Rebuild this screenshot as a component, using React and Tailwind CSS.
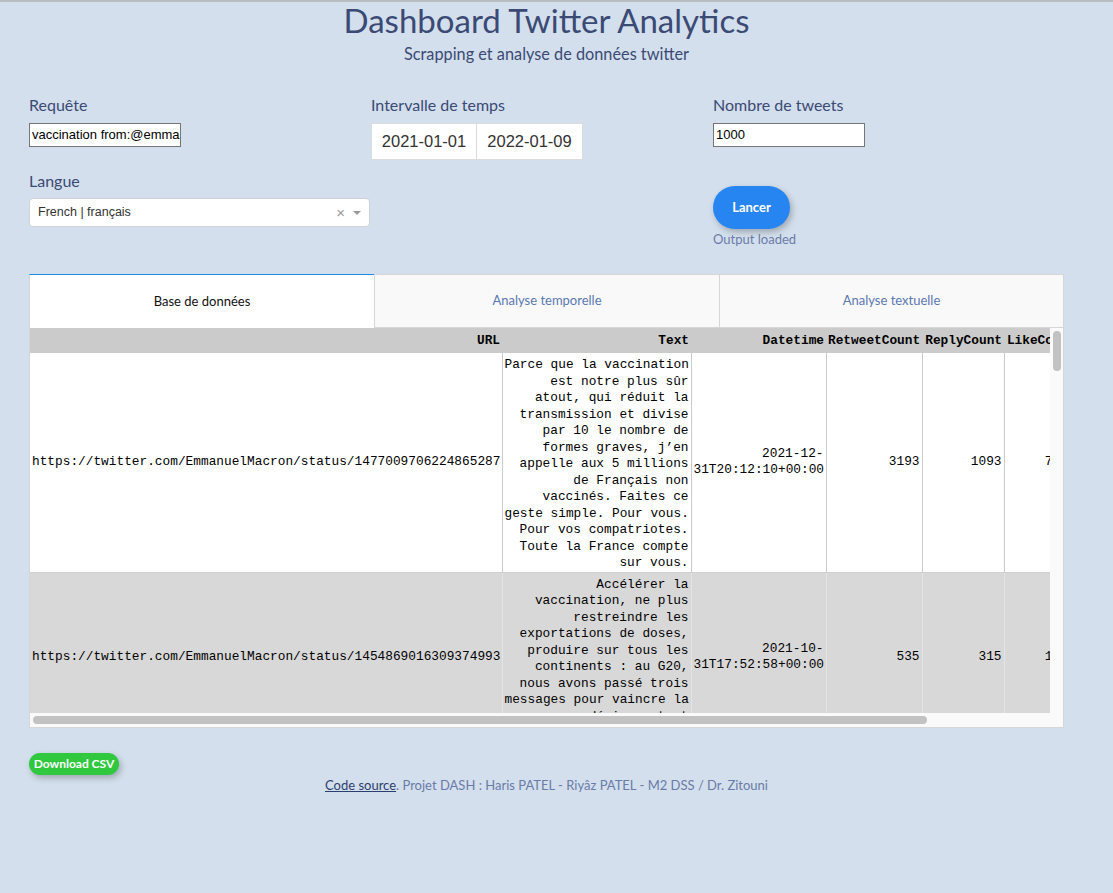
import React from "react";

const row1Text = [
  "Parce que la vaccination",
  "est notre plus sûr",
  "atout, qui réduit la",
  "transmission et divise",
  "par 10 le nombre de",
  "formes graves, j’en",
  "appelle aux 5 millions",
  "de Français non",
  "vaccinés. Faites ce",
  "geste simple. Pour vous.",
  "Pour vos compatriotes.",
  "Toute la France compte",
  "sur vous.",
];

const row2Text = [
  "Accélérer la",
  "vaccination, ne plus",
  "restreindre les",
  "exportations de doses,",
  "produire sur tous les",
  "continents : au G20,",
  "nous avons passé trois",
  "messages pour vaincre la",
  "pandémie partout",
  "dans le monde.",
];

function Lines({ lines }) {
  return (
    <>
      {lines.map((l, i) => (
        <div key={i}>{l}</div>
      ))}
    </>
  );
}

export default function App() {
  const mono = "font-['Liberation_Mono','Courier_New',monospace]";
  return (
    <div className="min-h-screen bg-[#d3dfec] font-['Lato','Noto_Sans',sans-serif]">
      <div className="h-[2px] bg-[#b9bcc0]" />
      <div className="pl-[29px]">
        <div className="w-[1035px]">
          <h1 className="-mt-[2px] text-center text-[33px] leading-[40px] text-[#3b4a74]">
            Dashboard Twitter Analytics
          </h1>
          <p className="mt-[2px] text-center text-[16.3px] leading-[24px] text-[#3b4a74]">
            Scrapping et analyse de données twitter
          </p>

          <div className="mt-[27px] flex">
            {/* col 1 */}
            <div className="w-[342px] flex flex-col">
              <label className="text-[16px] leading-[24px] text-[#3b4a74]">Requête</label>
              <div className="mt-[6px] h-[24px] w-[152px] overflow-hidden whitespace-nowrap border border-[#767676] bg-white px-[2px] text-[13px] leading-[22px] text-black font-['Liberation_Sans',Arial,sans-serif]">
                vaccination from:@emmanuelmacron
              </div>
              <label className="mt-[22px] text-[16px] leading-[24px] text-[#3b4a74]">Langue</label>
              <div className="mt-[5px] flex h-[29px] w-[341px] items-center rounded-[4px] border border-[#cfd3d8] bg-white pl-[8px] pr-[8px] text-[12.5px] text-[#333] font-['Liberation_Sans',Arial,sans-serif]">
                <span className="flex-1">French | français</span>
                <span className="text-[15px] leading-none text-[#999]">×</span>
                <span className="ml-[8px] h-0 w-0 border-x-[4px] border-t-[4px] border-x-transparent border-t-[#999]" />
              </div>
            </div>
            {/* col 2 */}
            <div className="w-[342px] flex flex-col">
              <label className="text-[16px] leading-[24px] text-[#3b4a74]">Intervalle de temps</label>
              <div className="mt-[6px] flex">
                <div className="flex h-[37px] w-[106px] items-center justify-center border border-[#dbdbdb] bg-white text-[16.5px] text-[#333] font-['Liberation_Sans',Arial,sans-serif]">
                  2021-01-01
                </div>
                <div className="flex h-[37px] w-[106px] items-center justify-center border border-l-0 border-[#dbdbdb] bg-white text-[16.5px] text-[#333] font-['Liberation_Sans',Arial,sans-serif]">
                  2022-01-09
                </div>
              </div>
            </div>
            {/* col 3 */}
            <div className="flex flex-col">
              <label className="text-[16px] leading-[24px] text-[#3b4a74]">Nombre de tweets</label>
              <div className="mt-[6px] h-[24px] w-[152px] border border-[#767676] bg-white px-[2px] text-[13px] leading-[22px] text-black font-['Liberation_Sans',Arial,sans-serif]">
                1000
              </div>
              <button className="mt-[39px] h-[43px] w-[77px] rounded-full bg-[#2785f1] text-[13px] font-bold text-white shadow-[2px_3px_6px_rgba(0,0,0,0.25)]">
                Lancer
              </button>
              <div className="mt-[2px] text-[13px] leading-[16px] text-[#6a7ba8]">Output loaded</div>
            </div>
          </div>

          {/* tabs */}
          <div className="mt-[27px] flex h-[54px] text-[13px]">
            <div className="flex w-[345px] items-center justify-center border-t border-l border-t-[#1e88e5] border-l-[#d6d6d6] bg-white text-[#111]">
              Base de données
            </div>
            <div className="flex w-[346px] items-center justify-center border border-[#d6d6d6] bg-[#f9f9f9] text-[#5b78b3]">
              Analyse temporelle
            </div>
            <div className="flex flex-1 items-center justify-center border border-l-0 border-[#d6d6d6] bg-[#f9f9f9] text-[#5b78b3]">
              Analyse textuelle
            </div>
          </div>

          {/* table panel */}
          <div className="flex flex-col border border-t-0 border-[#d6d6d6] bg-white">
            <div className="flex h-[385px]">
              <div className="flex-1 overflow-hidden">
                <table className={`table-fixed border-collapse text-[12.8px] text-black ${mono}`} style={{ width: 1166 }}>
                  <colgroup>
                    <col style={{ width: 472 }} />
                    <col style={{ width: 189 }} />
                    <col style={{ width: 135 }} />
                    <col style={{ width: 96 }} />
                    <col style={{ width: 82 }} />
                    <col style={{ width: 74 }} />
                    <col style={{ width: 118 }} />
                  </colgroup>
                  <thead>
                    <tr className="h-[25px] bg-[#cbcbcb] font-bold">
                      <th className="px-[2px] text-right">URL</th>
                      <th className="px-[2px] text-right">Text</th>
                      <th className="px-[2px] text-right">Datetime</th>
                      <th className="px-[2px] text-right">RetweetCount</th>
                      <th className="px-[2px] text-right">ReplyCount</th>
                      <th className="px-[2px] text-right">LikeCount</th>
                      <th className="px-[2px] text-right">QuoteCount</th>
                    </tr>
                  </thead>
                  <tbody className="leading-[16.5px]">
                    <tr className="bg-white">
                      <td className="px-[2px] text-right align-middle">https://twitter.com/EmmanuelMacron/status/1477009706224865287</td>
                      <td className="border-x border-[#cbcbcb] px-[2px] pt-[4px] pb-0 text-right whitespace-nowrap"><Lines lines={row1Text} /></td>
                      <td className="border-r border-[#cbcbcb] px-[2px] text-right">2021-12-<br />31T20:12:10+00:00</td>
                      <td className="border-r border-[#cbcbcb] px-[2px] text-right">3193</td>
                      <td className="border-r border-[#cbcbcb] px-[2px] text-right">1093</td>
                      <td className="border-r border-[#cbcbcb] px-[2px] text-right">7563</td>
                      <td className="border-r border-[#cbcbcb] px-[2px] text-right">212</td>
                    </tr>
                    <tr className="border-t border-[#d0d0d0] bg-[#d8d8d8]">
                      <td className="px-[2px] text-right">https://twitter.com/EmmanuelMacron/status/1454869016309374993</td>
                      <td className="border-x border-[#e4e4e4] px-[2px] pt-[4px] pb-0 text-right whitespace-nowrap"><Lines lines={row2Text} /></td>
                      <td className="border-r border-[#e4e4e4] px-[2px] text-right">2021-10-<br />31T17:52:58+00:00</td>
                      <td className="border-r border-[#e4e4e4] px-[2px] text-right">535</td>
                      <td className="border-r border-[#e4e4e4] px-[2px] text-right">315</td>
                      <td className="border-r border-[#e4e4e4] px-[2px] text-right">1482</td>
                      <td className="border-r border-[#e4e4e4] px-[2px] text-right">48</td>
                    </tr>
                  </tbody>
                </table>
              </div>
              <div className="w-[13px] bg-[#fafafa] pt-[3px] pl-[3px]">
                <div className="h-[40px] w-[8px] rounded-full bg-[#c2c2c2]" />
              </div>
            </div>
            <div className="h-[14px] bg-[#fafafa] pt-[3px] pl-[3px]">
              <div className="h-[8px] w-[894px] rounded-full bg-[#c2c2c2]" />
            </div>
          </div>

          <button className="mt-[25px] h-[22px] w-[90px] rounded-full bg-[#2fc83f] text-[12px] font-bold text-white shadow-[2px_3px_6px_rgba(0,0,0,0.25)]">
            Download CSV
          </button>
          <p className="mt-[2px] text-center text-[13px] leading-[16px] text-[#6a7ba8]">
            <span className="text-[#2d3e6e] underline">Code source</span>. Projet DASH : Haris PATEL - Riyâz PATEL - M2 DSS / Dr. Zitouni
          </p>
        </div>
      </div>
    </div>
  );
}
